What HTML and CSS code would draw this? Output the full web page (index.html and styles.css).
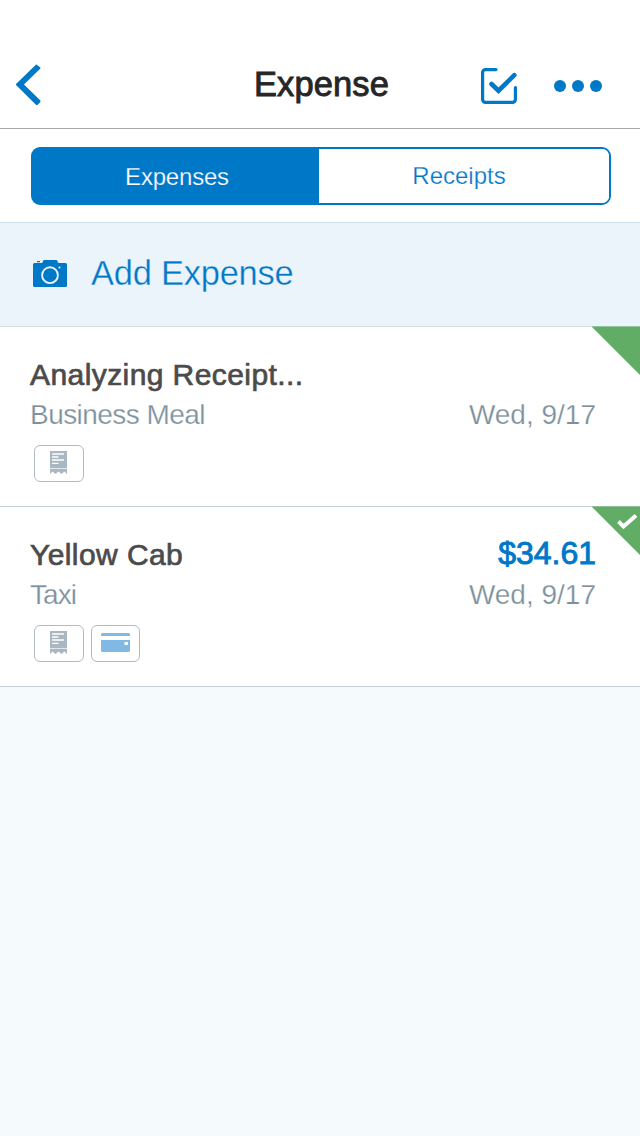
FILE: index.html
```html
<!DOCTYPE html>
<html lang="en">
<head>
<meta charset="utf-8">
<title>Expense</title>
<link rel="stylesheet" href="styles.css">
</head>
<body>
<header class="navbar">
  <svg class="back" width="26" height="42" viewBox="0 0 26 42"><path d="M20.400 .500 24.400 3.500V4.500L8 20.500 24.400 36.500V38L21.500 41H20.200L0 21V20L20.400 .200Z" fill="currentColor"/></svg>
  <h1 class="title">Expense</h1>
  <svg class="select" width="38" height="38" viewBox="0 0 38 38" fill="none" stroke="currentColor" stroke-linecap="round"><path d="M16 2.600H5.600a3 3 0 0 0-3 3V32.400a3 3 0 0 0 3 3H32.400a3 3 0 0 0 3-3V20.500" stroke-width="3.200"/><path d="M11.500 17 18.500 23.700 34.300 8.200" stroke-width="4.600"/></svg>
  <svg class="more" width="50" height="14" viewBox="0 0 50 14" fill="currentColor"><circle cx="7" cy="7" r="6"/><circle cx="25" cy="7" r="6"/><circle cx="43" cy="7" r="6"/></svg>
</header>
<nav class="tabs">
  <div class="segmented">
    <div class="segment active"><span>Expenses</span></div>
    <div class="segment"><span>Receipts</span></div>
  </div>
</nav>
<section class="add">
  <svg class="camera" width="34" height="28" viewBox="0 0 34 28"><path d="M1.500 4H8.500Q10 3.700 10 2.200 10 1 11.500 1H23Q24.500 1 24.500 2.200 24.500 3.700 26 4H32.500Q34 4 34 5.500V26.500Q34 28 32.500 28H1.500Q0 28 0 26.500V5.500Q0 4 1.500 4ZM4 2H7V3.300H4Z" fill="currentColor"/><circle cx="17" cy="16.200" r="7.900" fill="none" stroke="#ebf4fb" stroke-width="1.900"/><circle cx="26.500" cy="8.500" r="1.100" fill="#ebf4fb"/></svg>
  <span class="add-label">Add Expense</span>
</section>
<main>
  <article class="expense">
    <svg class="corner" width="48" height="49" viewBox="0 0 48 49"><path d="M0 1H48V49Z" fill="#62ad66"/><path d="M0 0H48V1H0Z" fill="#62ad66" opacity=".55"/></svg>
    <div class="row"><span class="name">Analyzing Receipt...</span></div>
    <div class="row detail"><span class="category meal">Business Meal</span><span class="date">Wed, 9/17</span></div>
    <div class="badges">
      <span class="badge"><svg width="17" height="23" viewBox="0 0 17 23"><path d="M0 0H17V23L14.500 20.500 11.500 23 8.500 20.500 5.500 23 2.500 20.500 0 23Z" fill="#a8b7c1"/><path d="M2 3H14M2 6H8.500M2 9H14M2 12.300H8.500" stroke="#fff" stroke-width="1.300"/><path d="M0 17.500H17" stroke="#e1e7ea"/></svg></span>
    </div>
  </article>
  <article class="expense">
    <svg class="corner" width="48" height="49" viewBox="0 0 48 49"><path d="M0 1H48V49Z" fill="#62ad66"/><path d="M0 0H48V1H0Z" fill="#62ad66" opacity=".55"/><path d="M26.500 15.500 31.500 20.500 44 9.500" fill="none" stroke="#fff" stroke-width="3.900"/></svg>
    <div class="row"><span class="name cab">Yellow Cab</span><span class="amount">$34.61</span></div>
    <div class="row detail"><span class="category taxi">Taxi</span><span class="date">Wed, 9/17</span></div>
    <div class="badges">
      <span class="badge"><svg width="17" height="23" viewBox="0 0 17 23"><path d="M0 0H17V23L14.500 20.500 11.500 23 8.500 20.500 5.500 23 2.500 20.500 0 23Z" fill="#a8b7c1"/><path d="M2 3H14M2 6H8.500M2 9H14M2 12.300H8.500" stroke="#fff" stroke-width="1.300"/><path d="M0 17.500H17" stroke="#e1e7ea"/></svg></span>
      <span class="badge card"><svg width="29" height="19" viewBox="0 0 29 19"><path d="M1 0H28L29 1V3H0V1ZM0 7H29V18L28 19H1L0 18Z" fill="#80b9e4"/><rect x="23.500" y="9" width="3.500" height="3" fill="#fff"/></svg></span>
    </div>
  </article>
</main>
</body>
</html>
```

FILE: styles.css
```css
* { box-sizing: border-box; }

body {
  margin: 0;
  min-height: 1136px;
  background: #f5fafd;
  color: #4b4b4b;
  font-family: "Liberation Sans", Arial, sans-serif;
}

svg { display: block; flex: none; }

.navbar {
  display: grid;
  grid-template-columns: 120px 1fr 38px 50px;
  align-items: center;
  height: 129px;
  padding: 42px 37px 0 16px;
  background: #fff;
  border-bottom: 1px solid #aaa;
  color: #0078c8;
}

.title {
  margin: -3px 0 0;
  padding-left: 118px;
  color: #262626;
  font-size: 34.5px;
  font-weight: 400;
  line-height: 40px;
  letter-spacing: 0.1px;
  -webkit-text-stroke: 0.9px;
}

.select { margin: 2px 0 0 -35px; }

.more { margin-top: 2px; }

.tabs { height: 93px; padding: 18px 29px 0 31px; background: #fff; }

.segmented {
  display: grid;
  grid-template-columns: 286px 1fr;
  height: 58px;
  overflow: hidden;
  background: linear-gradient(90deg, #0078c8 50%, #fff 50%);
  border: 2px solid #0078c8;
  border-radius: 9px;
}

.segment {
  display: flex;
  align-items: center;
  justify-content: center;
  padding-right: 10px;
  background: #fff;
  color: #0078c8;
  font-size: 24px;
  -webkit-text-stroke: 0.25px #fff;
}

.segment.active {
  padding: 2px 0 0 2px;
  background: #0078c8;
  color: #fff;
  letter-spacing: -0.2px;
  -webkit-text-stroke-color: #0078c8;
}

.add {
  display: flex;
  align-items: center;
  height: 105px;
  padding: 0 0 3px 33px;
  gap: 24px;
  background: #ebf4fb;
  border: solid #cfe0ec;
  border-width: 1px 0;
  color: #0078c8;
}

.add-label {
  font-size: 34.5px;
  line-height: 40px;
  letter-spacing: -0.25px;
  -webkit-text-stroke: 0.35px #ebf4fb;
}

.expense {
  position: relative;
  height: 180px;
  padding: 30px 44px 0 30px;
  background: #fff;
  border-bottom: 1px solid #c7d1d8;
}

.corner { position: absolute; top: -1px; right: 0; }

.row { display: flex; justify-content: space-between; height: 36px; line-height: 36px; }

.name { font-size: 30px; letter-spacing: 0.42px; -webkit-text-stroke: 0.7px; }

.amount { color: #0078c8; font-size: 32px; line-height: 33px; -webkit-text-stroke: 0.9px; }

.detail {
  height: 42px;
  line-height: 44px;
  color: #7d909b;
  font-size: 28px;
  -webkit-text-stroke: 0.25px #fff;
}

.meal { letter-spacing: -0.55px; }

.taxi { letter-spacing: -0.9px; }

.badges { display: flex; gap: 7px; margin: 10px 0 0 4px; }

.badge {
  display: flex;
  align-items: center;
  justify-content: center;
  width: 50px;
  height: 37px;
  padding: 0 1px 2px 0;
  border: 1px solid #adbcc6;
  border-radius: 6px;
}

.card { width: 49px; padding-right: 0; }
```
